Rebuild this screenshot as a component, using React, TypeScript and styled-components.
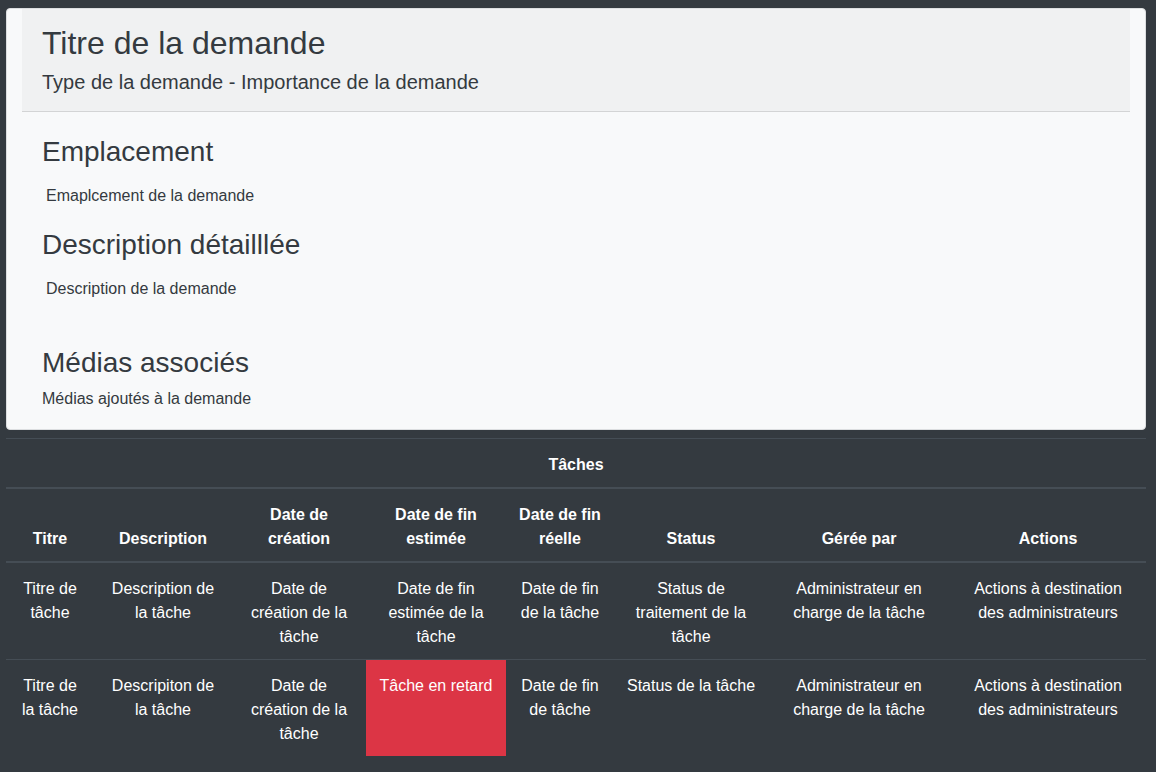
import React from "react";
import styled, { createGlobalStyle } from "styled-components";

const GlobalStyle = createGlobalStyle`
  html, body {
    margin: 0;
    background: #343a40;
  }
  body {
    font-family: "Liberation Sans", Arial, sans-serif;
    color: #343a40;
  }
  * { box-sizing: border-box; }
`;

const Page = styled.main`
  padding: 8px 10px 16px 6px;
`;

const Card = styled.section`
  background: #f8f9fa;
  border: 1px solid #dcdee0;
  border-radius: 4px;
  padding: 0 15px;
`;

const CardHeader = styled.header`
  background: #f0f1f2;
  border-bottom: 1px solid #d3d4d5;
  padding: 15px 20px 17px;
`;

const Title = styled.h2`
  margin: 0 0 8px;
  font-size: 32px;
  line-height: 38px;
  font-weight: 400;
  color: #343a40;
`;

const Subtitle = styled.h5`
  margin: 0;
  font-size: 20px;
  line-height: 24px;
  font-weight: 400;
  color: #343a40;
`;

const CardBody = styled.div`
  padding: 23px 20px 18px;
`;

const SectionTitle = styled.h3<{ $space?: number }>`
  margin: ${(p) => p.$space ?? 0}px 0 0;
  font-size: 28px;
  line-height: 34px;
  font-weight: 400;
  color: #343a40;
`;

const SectionText = styled.p<{ $space: number; $indent?: boolean }>`
  margin: ${(p) => p.$space}px 0 0;
  padding-left: ${(p) => (p.$indent ? 4 : 0)}px;
  font-size: 16px;
  line-height: 24px;
  color: #343a40;
`;

const Table = styled.table`
  margin-top: 8px;
  width: 100%;
  table-layout: fixed;
  border-collapse: separate;
  border-spacing: 0;
  color: #fff;
  font-size: 16px;
  line-height: 24px;
`;

const CaptionCell = styled.th`
  padding: 14px 12px 10px;
  border-top: 1px solid #454d55;
  border-bottom: 2px solid #454d55;
  font-weight: 700;
  text-align: center;
`;

const HeadCell = styled.th`
  padding: 14px 12px 10px;
  vertical-align: bottom;
  border-bottom: 2px solid #454d55;
  font-weight: 700;
  text-align: center;
`;

const BodyCell = styled.td<{ $first?: boolean; $danger?: boolean }>`
  padding: 14px 12px 10px;
  vertical-align: top;
  text-align: center;
  border-top: ${(p) => (p.$first ? "0" : "1px solid #454d55")};
  background: ${(p) => (p.$danger ? "#dc3545" : "transparent")};
`;

const widths = [88, 138, 134, 140, 108, 154, 182, 196];

const headers = [
  "Titre",
  "Description",
  "Date de création",
  "Date de fin estimée",
  "Date de fin réelle",
  "Status",
  "Gérée par",
  "Actions",
];

const rows: { text: string; danger?: boolean }[][] = [
  [
    { text: "Titre de tâche" },
    { text: "Description de la tâche" },
    { text: "Date de création de la tâche" },
    { text: "Date de fin estimée de la tâche" },
    { text: "Date de fin de la tâche" },
    { text: "Status de traitement de la tâche" },
    { text: "Administrateur en charge de la tâche" },
    { text: "Actions à destination des administrateurs" },
  ],
  [
    { text: "Titre de la tâche" },
    { text: "Descripiton de la tâche" },
    { text: "Date de création de la tâche" },
    { text: "Tâche en retard", danger: true },
    { text: "Date de fin de tâche" },
    { text: "Status de la tâche" },
    { text: "Administrateur en charge de la tâche" },
    { text: "Actions à destination des administrateurs" },
  ],
];

export default function App() {
  return (
    <Page>
      <GlobalStyle />
      <Card>
        <CardHeader>
          <Title>Titre de la demande</Title>
          <Subtitle>Type de la demande - Importance de la demande</Subtitle>
        </CardHeader>
        <CardBody>
          <SectionTitle>Emplacement</SectionTitle>
          <SectionText $space={15} $indent>
            Emaplcement de la demande
          </SectionText>
          <SectionTitle $space={20}>Description détailllée</SectionTitle>
          <SectionText $space={15} $indent>
            Description de la demande
          </SectionText>
          <SectionTitle $space={45}>Médias associés</SectionTitle>
          <SectionText $space={7}>Médias ajoutés à la demande</SectionText>
        </CardBody>
      </Card>
      <Table>
        <colgroup>
          {widths.map((w, i) => (
            <col key={i} style={{ width: w }} />
          ))}
        </colgroup>
        <thead>
          <tr>
            <CaptionCell colSpan={8}>Tâches</CaptionCell>
          </tr>
          <tr>
            {headers.map((h) => (
              <HeadCell key={h}>{h}</HeadCell>
            ))}
          </tr>
        </thead>
        <tbody>
          {rows.map((row, ri) => (
            <tr key={ri}>
              {row.map((c, ci) => (
                <BodyCell key={ci} $first={ri === 0} $danger={c.danger}>
                  {c.text}
                </BodyCell>
              ))}
            </tr>
          ))}
        </tbody>
      </Table>
    </Page>
  );
}
